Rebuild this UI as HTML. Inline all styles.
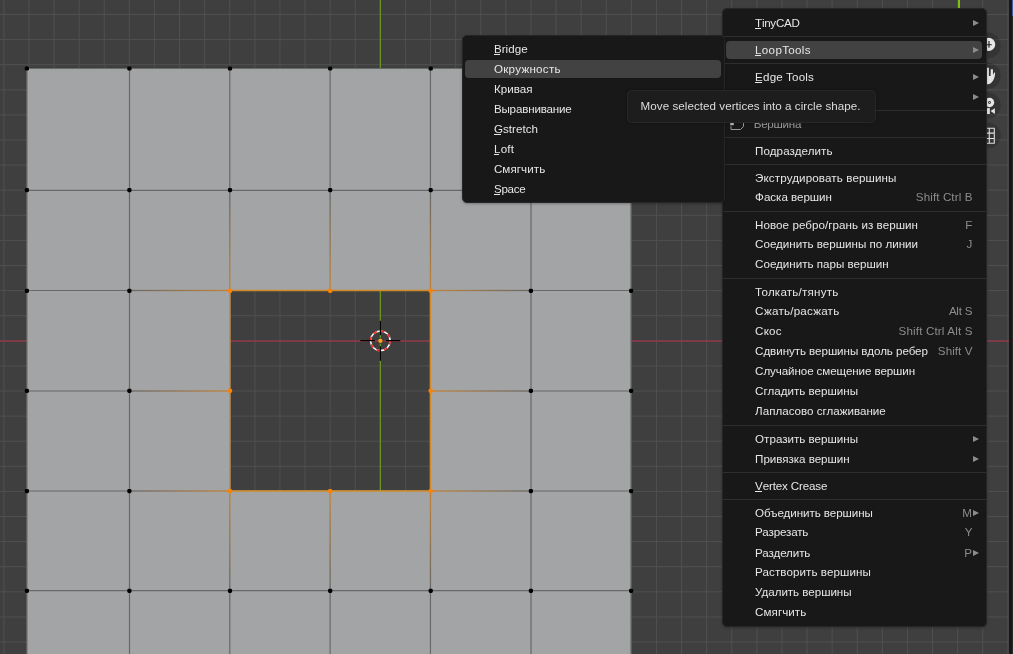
<!DOCTYPE html>
<html lang="ru"><head><meta charset="utf-8"><title>Blender</title>
<style>
html,body{margin:0;padding:0;}
body{width:1013px;height:654px;overflow:hidden;position:relative;background:#3f3f3f;font-family:"Liberation Sans", sans-serif;font-size:11.6px;line-height:14px;color:#e6e6e6;}
#vp{position:absolute;left:0;top:0;}
.menu{position:absolute;background:#181818;border-radius:5px;box-shadow:0 1px 2.5px rgba(0,0,0,.28);box-sizing:border-box;border:1px solid #262626;will-change:transform;}
.menu .it{position:absolute;white-space:nowrap;height:14px;}
.menu .sc{position:absolute;white-space:nowrap;height:14px;color:#8c8c8c;text-align:right;}
.menu .sep{position:absolute;left:0;right:0;height:1px;background:#2e2e2e;}
.menu .hl{position:absolute;background:#424242;border-radius:4px;}
.menu .ar{position:absolute;width:0;height:0;border-left:6px solid #8c8c8c;border-top:3.3px solid transparent;border-bottom:3.3px solid transparent;}
.menu u{text-decoration:none;position:relative;}
.menu u::after{content:"";position:absolute;left:0.3px;width:80%;top:11.50px;height:1px;background:#e6e6e6;}
#tip{position:absolute;left:627px;top:90px;width:248.7px;height:32.8px;box-sizing:border-box;background:#1d1d1d;border:1px solid #272727;border-radius:4.5px;box-shadow:0 0 3px rgba(0,0,0,.3);color:#dcdcdc;will-change:transform;}
#tip span{position:absolute;left:12.6px;white-space:nowrap;}
#strip{position:absolute;left:1009px;top:0;width:3px;height:654px;background:#181818;border-right:1px solid #2b2b2b;}
#strip i{position:absolute;left:3px;top:0;width:1px;height:16px;background:#3f61a0;}
</style></head><body>
<svg id="vp" width="1013" height="654" viewBox="0 0 1013 654">
<rect width="1013" height="654" fill="#3f3f3f"/>
<path d="M3.86 0V654M28.96 0V654M54.06 0V654M79.16 0V654M104.26 0V654M129.36 0V654M154.46 0V654M179.56 0V654M204.66 0V654M229.76 0V654M254.86 0V654M279.96 0V654M305.06 0V654M330.16 0V654M355.26 0V654M380.36 0V654M405.46 0V654M430.56 0V654M455.66 0V654M480.76 0V654M505.86 0V654M530.96 0V654M556.06 0V654M581.16 0V654M606.26 0V654M631.36 0V654M656.46 0V654M681.56 0V654M706.66 0V654M731.76 0V654M756.86 0V654M781.96 0V654M807.06 0V654M832.16 0V654M857.26 0V654M882.36 0V654M907.46 0V654M932.56 0V654M957.66 0V654M982.76 0V654M1007.86 0V654M0 14.50H1013M0 39.60H1013M0 64.70H1013M0 89.80H1013M0 114.90H1013M0 140.00H1013M0 165.10H1013M0 190.20H1013M0 215.30H1013M0 240.40H1013M0 265.50H1013M0 290.60H1013M0 315.70H1013M0 340.80H1013M0 365.90H1013M0 391.00H1013M0 416.10H1013M0 441.20H1013M0 466.30H1013M0 491.40H1013M0 516.50H1013M0 541.60H1013M0 566.70H1013M0 591.80H1013M0 616.90H1013M0 642.00H1013" stroke="#505050" stroke-width="1" fill="none"/>
<line x1="0" y1="341" x2="1013" y2="341" stroke="#8f3848" stroke-width="1.5"/>
<line x1="380.36" y1="0" x2="380.36" y2="654" stroke="#669427" stroke-width="1.3"/>
<path fill-rule="evenodd" fill="#a3a4a5" d="M26.9 68.5H631.0V654H26.9Z M230.4 291.1H429.84999999999997V490.4H230.4Z"/>
<defs><linearGradient id="gr" gradientUnits="objectBoundingBox" x1="0" y1="0" x2="1" y2="0"><stop offset="0" stop-color="#c38238"/><stop offset="1" stop-color="#676968"/></linearGradient><linearGradient id="gl" gradientUnits="objectBoundingBox" x1="1" y1="0" x2="0" y2="0"><stop offset="0" stop-color="#c38238"/><stop offset="1" stop-color="#676968"/></linearGradient><linearGradient id="gd" gradientUnits="objectBoundingBox" x1="0" y1="0" x2="0" y2="1"><stop offset="0" stop-color="#c38238"/><stop offset="1" stop-color="#676968"/></linearGradient><linearGradient id="gu" gradientUnits="objectBoundingBox" x1="0" y1="1" x2="0" y2="0"><stop offset="0" stop-color="#c38238"/><stop offset="1" stop-color="#676968"/></linearGradient></defs>
<path d="M26.9 68.5H129.5M129.5 68.5H229.8M229.8 68.5H330.1M330.1 68.5H430.45M430.45 68.5H531.0M531.0 68.5H631.0M26.9 190.4H129.5M129.5 190.4H229.8M229.8 190.4H330.1M330.1 190.4H430.45M430.45 190.4H531.0M531.0 190.4H631.0M26.9 290.5H129.5M531.0 290.5H631.0M26.9 391.0H129.5M531.0 391.0H631.0M26.9 491.0H129.5M531.0 491.0H631.0M26.9 590.6H129.5M129.5 590.6H229.8M229.8 590.6H330.1M330.1 590.6H430.45M430.45 590.6H531.0M531.0 590.6H631.0M26.9 68.5V190.4M129.5 68.5V190.4M229.8 68.5V190.4M330.1 68.5V190.4M430.45 68.5V190.4M531.0 68.5V190.4M631.0 68.5V190.4M26.9 190.4V290.5M129.5 190.4V290.5M531.0 190.4V290.5M631.0 190.4V290.5M26.9 290.5V391.0M129.5 290.5V391.0M531.0 290.5V391.0M631.0 290.5V391.0M26.9 391.0V491.0M129.5 391.0V491.0M531.0 391.0V491.0M631.0 391.0V491.0M26.9 491.0V590.6M129.5 491.0V590.6M531.0 491.0V590.6M631.0 491.0V590.6M26.9 590.6V691.0M129.5 590.6V691.0M229.8 590.6V691.0M330.1 590.6V691.0M430.45 590.6V691.0M531.0 590.6V691.0M631.0 590.6V691.0" stroke="#676968" stroke-width="1.2" fill="none"/>
<rect x="129.50" y="289.85" width="100.30" height="1.30" fill="url(#gl)"/><rect x="430.45" y="289.85" width="100.55" height="1.30" fill="url(#gr)"/><rect x="129.50" y="390.35" width="100.30" height="1.30" fill="url(#gl)"/><rect x="430.45" y="390.35" width="100.55" height="1.30" fill="url(#gr)"/><rect x="129.50" y="490.35" width="100.30" height="1.30" fill="url(#gl)"/><rect x="430.45" y="490.35" width="100.55" height="1.30" fill="url(#gr)"/><rect x="229.15" y="190.40" width="1.30" height="100.10" fill="url(#gu)"/><rect x="329.45" y="190.40" width="1.30" height="100.10" fill="url(#gu)"/><rect x="429.80" y="190.40" width="1.30" height="100.10" fill="url(#gu)"/><rect x="229.15" y="491.00" width="1.30" height="99.60" fill="url(#gd)"/><rect x="329.45" y="491.00" width="1.30" height="99.60" fill="url(#gd)"/><rect x="429.80" y="491.00" width="1.30" height="99.60" fill="url(#gd)"/>
<path d="M229.8 290.5H330.1M330.1 290.5H430.45M229.8 491.0H330.1M330.1 491.0H430.45M229.8 290.5V391.0M430.45 290.5V391.0M229.8 391.0V491.0M430.45 391.0V491.0" stroke="#d08a26" stroke-width="1.3" fill="none"/>
<rect x="24.80" y="66.40" width="4.2" height="4.2" rx="1.4" fill="#000"/><rect x="127.30" y="66.40" width="4.2" height="4.2" rx="1.4" fill="#000"/><rect x="227.90" y="66.40" width="4.2" height="4.2" rx="1.4" fill="#000"/><rect x="328.10" y="66.40" width="4.2" height="4.2" rx="1.4" fill="#000"/><rect x="428.60" y="66.40" width="4.2" height="4.2" rx="1.4" fill="#000"/><rect x="528.80" y="66.40" width="4.2" height="4.2" rx="1.4" fill="#000"/><rect x="629.00" y="66.40" width="4.2" height="4.2" rx="1.4" fill="#000"/><rect x="24.80" y="188.00" width="4.2" height="4.2" rx="1.4" fill="#000"/><rect x="127.30" y="188.00" width="4.2" height="4.2" rx="1.4" fill="#000"/><rect x="227.90" y="188.00" width="4.2" height="4.2" rx="1.4" fill="#000"/><rect x="328.10" y="188.00" width="4.2" height="4.2" rx="1.4" fill="#000"/><rect x="428.60" y="188.00" width="4.2" height="4.2" rx="1.4" fill="#000"/><rect x="528.80" y="188.00" width="4.2" height="4.2" rx="1.4" fill="#000"/><rect x="629.00" y="188.00" width="4.2" height="4.2" rx="1.4" fill="#000"/><rect x="24.80" y="288.70" width="4.2" height="4.2" rx="1.4" fill="#000"/><rect x="127.30" y="288.70" width="4.2" height="4.2" rx="1.4" fill="#000"/><rect x="227.90" y="288.70" width="4.2" height="4.2" rx="1.4" fill="#ff8000"/><rect x="328.10" y="288.70" width="4.2" height="4.2" rx="1.4" fill="#ff8000"/><rect x="428.60" y="288.70" width="4.2" height="4.2" rx="1.4" fill="#ff8000"/><rect x="528.80" y="288.70" width="4.2" height="4.2" rx="1.4" fill="#000"/><rect x="629.00" y="288.70" width="4.2" height="4.2" rx="1.4" fill="#000"/><rect x="24.80" y="388.80" width="4.2" height="4.2" rx="1.4" fill="#000"/><rect x="127.30" y="388.80" width="4.2" height="4.2" rx="1.4" fill="#000"/><rect x="227.90" y="388.80" width="4.2" height="4.2" rx="1.4" fill="#ff8000"/><rect x="428.60" y="388.80" width="4.2" height="4.2" rx="1.4" fill="#ff8000"/><rect x="528.80" y="388.80" width="4.2" height="4.2" rx="1.4" fill="#000"/><rect x="629.00" y="388.80" width="4.2" height="4.2" rx="1.4" fill="#000"/><rect x="24.80" y="489.00" width="4.2" height="4.2" rx="1.4" fill="#000"/><rect x="127.30" y="489.00" width="4.2" height="4.2" rx="1.4" fill="#000"/><rect x="227.90" y="489.00" width="4.2" height="4.2" rx="1.4" fill="#ff8000"/><rect x="328.10" y="489.00" width="4.2" height="4.2" rx="1.4" fill="#ff8000"/><rect x="428.60" y="489.00" width="4.2" height="4.2" rx="1.4" fill="#ff8000"/><rect x="528.80" y="489.00" width="4.2" height="4.2" rx="1.4" fill="#000"/><rect x="629.00" y="489.00" width="4.2" height="4.2" rx="1.4" fill="#000"/><rect x="24.80" y="588.70" width="4.2" height="4.2" rx="1.4" fill="#000"/><rect x="127.30" y="588.70" width="4.2" height="4.2" rx="1.4" fill="#000"/><rect x="227.90" y="588.70" width="4.2" height="4.2" rx="1.4" fill="#000"/><rect x="328.10" y="588.70" width="4.2" height="4.2" rx="1.4" fill="#000"/><rect x="428.60" y="588.70" width="4.2" height="4.2" rx="1.4" fill="#000"/><rect x="528.80" y="588.70" width="4.2" height="4.2" rx="1.4" fill="#000"/><rect x="629.00" y="588.70" width="4.2" height="4.2" rx="1.4" fill="#000"/>
<g fill="none"><circle cx="380.36" cy="340.75" r="9.8" stroke="#fff" stroke-width="1.5"/><circle cx="380.36" cy="340.75" r="9.8" stroke="#f02020" stroke-width="1.5" stroke-dasharray="3.85 3.85"/><path d="M360.36 340.55H374.86M385.86 340.55H400.36M380.36 320.75V335.25M380.36 346.25V360.75" stroke="#000" stroke-width="1.2"/></g>
<circle cx="380.36" cy="340.75" r="2.6" fill="#f5a030" stroke="#1a1a1a" stroke-width="0.6"/>
<rect x="958" y="0" width="2" height="9" fill="#7dc012"/>
<circle cx="987.6" cy="45.6" r="13.1" fill="#000" fill-opacity="0.17"/><circle cx="987.6" cy="75.8" r="13.1" fill="#000" fill-opacity="0.17"/><circle cx="987.6" cy="105.3" r="13.1" fill="#000" fill-opacity="0.17"/><circle cx="987.6" cy="135.5" r="13.1" fill="#000" fill-opacity="0.17"/>
<circle cx="988.6" cy="44.4" r="6.6" fill="#e6e6e6"/><path d="M985 44.7H991.7M989 41.1V47.7" stroke="#1c1c1c" stroke-width="1.1" fill="none"/>
<path d="M983 67.8H988.9V76H990.55L990.8 69.2H992.9L993 75L994.3 72.2L995.15 72.9C995 77 993.6 80.6 991.3 82.8C990 83.9 988.6 84.3 986.5 84.3H983Z" fill="#e6e6e6"/>
<circle cx="989.5" cy="102.5" r="4.7" fill="#e6e6e6"/><circle cx="989.5" cy="102.5" r="1.4" fill="#3a3a3a"/><circle cx="989.5" cy="102.5" r="0.6" fill="#e6e6e6"/><rect x="982" y="108.1" width="7.8" height="5.9" fill="#e6e6e6"/><path d="M990.6 111.1L994.9 108.3V113.9Z" fill="#e6e6e6"/>
<path d="M982.2 128.3H994.3V143.3H982.2ZM982 133.1H994.5M982 138.5H994.5M989.3 128V143.5" fill="none" stroke="#e0e0e0" stroke-width="1.05"/>
</svg>
<div id="strip"><i></i></div>
<div class="menu" id="main" style="left:722px;top:8px;width:264.8px;height:619.2px">
<div class="hl" style="left:3px;top:32.2px;width:255.79999999999995px;height:17.6px"></div>
<div class="sep" style="top:26.8px"></div><div class="sep" style="top:53.9px"></div><div class="sep" style="top:100.8px"></div><div class="sep" style="top:127.7px"></div><div class="sep" style="top:154.7px"></div><div class="sep" style="top:202.1px"></div><div class="sep" style="top:269.1px"></div><div class="sep" style="top:415.9px"></div><div class="sep" style="top:462.8px"></div><div class="sep" style="top:490.1px"></div>
<div class="it" style="left:30.7px;top:108.00px;color:#9a9a9a;letter-spacing:-0.269px">Вершина</div>
<svg style="position:absolute;left:6px;top:105px" width="16" height="16" viewBox="0 0 16 16"><path d="M2 4.5V8M2 12.3V15.5H11.5L14.5 12.5V2.5H5" fill="none" stroke="#999" stroke-width="1"/><rect x="1.2" y="1.2" width="3.6" height="3.6" fill="#bbb"/><rect x="1.2" y="9" width="3.6" height="2.2" fill="#bbb"/></svg>
<div class="it" style="left:32.1px;top:7.00px;letter-spacing:-0.282px"><u style="letter-spacing:0;margin-right:-0.282px">T</u>inyCAD</div><div class="ar" style="left:250.0px;top:10.70px"></div>
<div class="it" style="left:32.1px;top:34.00px;letter-spacing:0.313px"><u style="letter-spacing:0;margin-right:0.313px">L</u>oopTools</div><div class="ar" style="left:250.0px;top:37.70px"></div>
<div class="it" style="left:32.1px;top:61.00px;letter-spacing:0.182px"><u style="letter-spacing:0;margin-right:0.182px">E</u>dge Tools</div><div class="ar" style="left:250.0px;top:64.70px"></div>
<div class="ar" style="left:250.0px;top:84.70px"></div>
<div class="it" style="left:32.1px;top:135.00px;letter-spacing:0.077px">Подразделить</div>
<div class="it" style="left:32.1px;top:162.00px;letter-spacing:0.122px">Экструдировать вершины</div>
<div class="it" style="left:32.1px;top:181.00px;letter-spacing:-0.025px">Фаска вершин</div><div class="sc" style="right:13.4px;top:181.00px;letter-spacing:0.105px;margin-right:-0.105px">Shift Ctrl B</div>
<div class="it" style="left:32.1px;top:209.00px;letter-spacing:0.056px">Новое ребро/грань из вершин</div><div class="sc" style="right:13.4px;top:209.00px;letter-spacing:-1.586px;margin-right:1.586px">F</div>
<div class="it" style="left:32.1px;top:228.00px;letter-spacing:0.000px">Соединить вершины по линии</div><div class="sc" style="right:13.4px;top:228.00px;letter-spacing:-0.800px;margin-right:0.800px">J</div>
<div class="it" style="left:32.1px;top:248.00px;letter-spacing:-0.001px">Соединить пары вершин</div>
<div class="it" style="left:32.1px;top:276.00px;letter-spacing:0.214px">Толкать/тянуть</div>
<div class="it" style="left:32.1px;top:295.00px;letter-spacing:0.237px">Сжать/расжать</div><div class="sc" style="right:13.4px;top:295.00px;letter-spacing:-0.240px;margin-right:0.240px">Alt S</div>
<div class="it" style="left:32.1px;top:315.00px;letter-spacing:0.216px">Скос</div><div class="sc" style="right:13.4px;top:315.00px;letter-spacing:0.153px;margin-right:-0.153px">Shift Ctrl Alt S</div>
<div class="it" style="left:32.1px;top:335.00px;letter-spacing:-0.057px">Сдвинуть вершины вдоль ребер</div><div class="sc" style="right:13.4px;top:335.00px;letter-spacing:0.061px;margin-right:-0.061px">Shift V</div>
<div class="it" style="left:32.1px;top:355.00px;letter-spacing:-0.089px">Случайное смещение вершин</div>
<div class="it" style="left:32.1px;top:375.00px;letter-spacing:0.008px">Сгладить вершины</div>
<div class="it" style="left:32.1px;top:395.00px;letter-spacing:-0.001px">Лапласово сглаживание</div>
<div class="it" style="left:32.1px;top:423.00px;letter-spacing:0.003px">Отразить вершины</div><div class="ar" style="left:250.0px;top:426.70px"></div>
<div class="it" style="left:32.1px;top:443.00px;letter-spacing:-0.036px">Привязка вершин</div><div class="ar" style="left:250.0px;top:446.70px"></div>
<div class="it" style="left:32.1px;top:470.00px;letter-spacing:-0.154px"><u style="letter-spacing:0;margin-right:-0.154px">V</u>ertex Crease</div>
<div class="it" style="left:32.1px;top:497.00px;letter-spacing:-0.061px">Объединить вершины</div><div class="sc" style="right:13.8px;top:497.00px;letter-spacing:-0.564px;margin-right:0.564px">M</div><div class="ar" style="left:250.0px;top:500.70px"></div>
<div class="it" style="left:32.1px;top:516.00px;letter-spacing:-0.146px">Разрезать</div><div class="sc" style="right:13.4px;top:516.00px;letter-spacing:-0.938px;margin-right:0.938px">Y</div>
<div class="it" style="left:32.1px;top:537.00px;letter-spacing:-0.109px">Разделить</div><div class="sc" style="right:13.8px;top:537.00px;letter-spacing:-1.537px;margin-right:1.537px">P</div><div class="ar" style="left:250.0px;top:540.70px"></div>
<div class="it" style="left:32.1px;top:556.00px;letter-spacing:0.079px">Растворить вершины</div>
<div class="it" style="left:32.1px;top:576.00px;letter-spacing:-0.032px">Удалить вершины</div>
<div class="it" style="left:32.1px;top:596.00px;letter-spacing:0.057px">Смягчить</div>
</div>
<div class="menu" id="sub" style="left:462px;top:35px;width:263.1px;height:167.9px">
<div class="hl" style="left:2.0px;top:24.2px;width:255.89999999999998px;height:17.6px"></div>
<div class="it" style="left:30.9px;top:6.00px;letter-spacing:0.061px"><u style="letter-spacing:0;margin-right:0.061px">B</u>ridge</div>
<div class="it" style="left:30.9px;top:26.00px;letter-spacing:0.288px">Окружность</div>
<div class="it" style="left:30.9px;top:46.00px;letter-spacing:0.041px">Кривая</div>
<div class="it" style="left:30.9px;top:66.00px;letter-spacing:-0.171px">Выравнивание</div>
<div class="it" style="left:30.9px;top:86.00px;letter-spacing:0.033px"><u style="letter-spacing:0;margin-right:0.033px">G</u>stretch</div>
<div class="it" style="left:30.9px;top:106.00px;letter-spacing:0.288px"><u style="letter-spacing:0;margin-right:0.288px">L</u>oft</div>
<div class="it" style="left:30.9px;top:126.00px;letter-spacing:0.082px">Смягчить</div>
<div class="it" style="left:30.9px;top:146.00px;letter-spacing:-0.238px"><u style="letter-spacing:0;margin-right:-0.238px">S</u>pace</div>
</div>
<div id="tip"><span style="top:8.00px;letter-spacing:0.051px">Move selected vertices into a circle shape.</span></div>
</body></html>
